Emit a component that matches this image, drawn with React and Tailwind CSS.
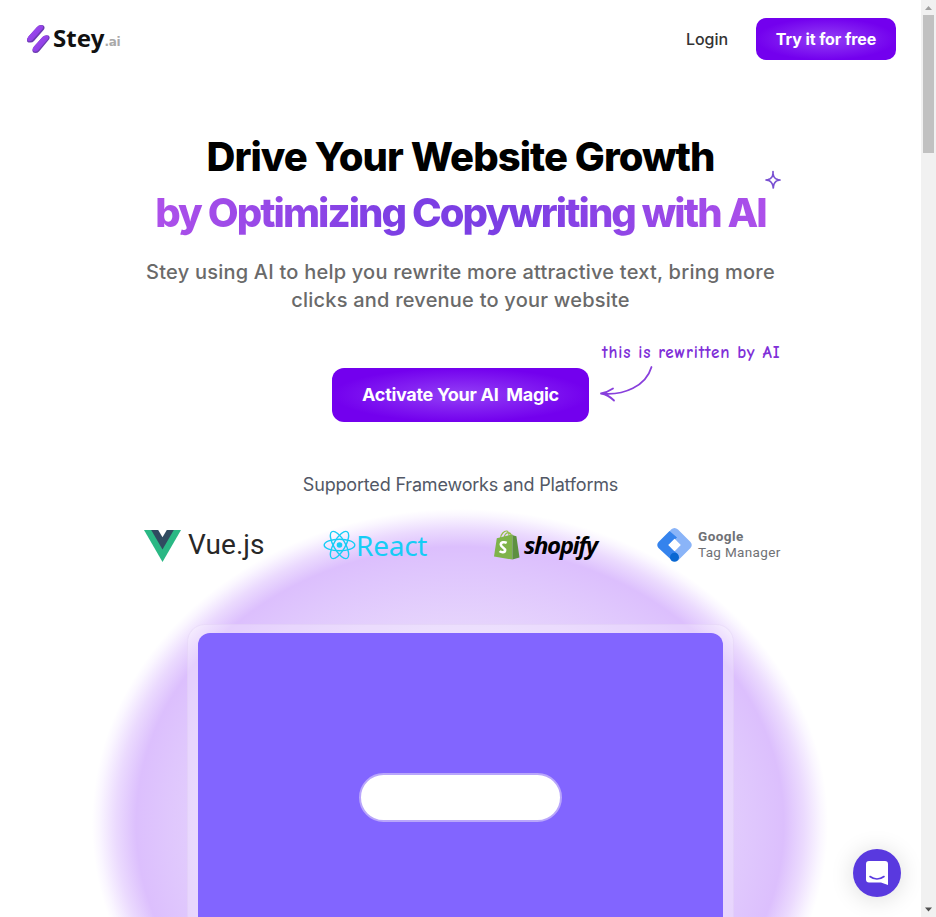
import React from "react";

function SteyMark() {
  return (
    <svg width="24" height="30" viewBox="0 0 24 30" className="shrink-0">
      <defs>
        <linearGradient id="mark" x1="0" y1="0" x2="1" y2="1">
          <stop offset="0" stopColor="#a64ef2" />
          <stop offset="1" stopColor="#8438e0" />
        </linearGradient>
      </defs>
      <path d="M1 17 Q0.500 15 2.500 12.500 L11 3 Q12.500 1 15 1 L17 1.200 Q19.500 2.500 18 5.500 L8 17 Q6.500 18.500 4.500 18.500 L2.500 18.500 Q1.300 18.300 1 17Z" fill="#6b3bb0" />
      <path d="M1.200 15.500 Q1 14.300 2.500 12.500 L11 3 Q13 1 15.500 1.200 Q18.200 2 16.500 5 L6.500 16 Q4 18 2 17 Q1.300 16.500 1.200 15.500Z" fill="url(#mark)" />
      <path d="M6.500 27 Q6 25 8 22.500 L16.500 13 Q18 11.200 20.500 11.200 L22.500 11.500 Q24.500 13 23 15.500 L13 27.500 Q11.500 29 9.500 29 L8 28.800 Q6.800 28.500 6.500 27Z" fill="#6b3bb0" />
      <path d="M6.700 25.500 Q6.500 24.300 8 22.500 L16.500 13 Q18.500 11.200 21 11.400 Q23.500 12.300 22 15 L12 26.500 Q9.500 28.500 7.500 27 Q6.800 26.500 6.700 25.500Z" fill="url(#mark)" />
    </svg>
  );
}

function Header() {
  return (
    <header className="flex h-[78px] items-center justify-between pl-[26px] pr-[25px]">
      <div className="flex items-center">
        <SteyMark />
        <span className="-mt-[2px] ml-[3px] whitespace-nowrap font-['Noto_Sans',sans-serif] text-[24px] font-bold leading-[30px] tracking-[0.1px] text-[#111]">
          Stey
        </span>
        <span className="mt-[6px] font-['DejaVu_Sans',sans-serif] text-[12px] font-bold leading-4 tracking-[-0.4px] text-[#a9a9a9]">.ai</span>
      </div>
      <nav className="flex items-center gap-7">
        <a className="font-['Inter',sans-serif] text-[16px] font-medium leading-6 tracking-[-0.05px] text-[#333]">Login</a>
        <button className="h-[42px] w-[140px] whitespace-nowrap rounded-[10px] bg-[radial-gradient(ellipse_closest-side,#9340f5,#7300ee)] font-['Inter',sans-serif] text-[16px] font-bold tracking-[-0.08px] text-white">
          Try it for free
        </button>
      </nav>
    </header>
  );
}

function Sparkle() {
  return (
    <svg width="18" height="20" viewBox="0 0 18 20" className="absolute -right-[16px] -top-[15px]" fill="none" stroke="#7950d2" strokeWidth="1.7" strokeLinejoin="round" strokeLinecap="round">
      <path d="M9 1.500 V3.500 C9.500 7.500 11 9 14 9.700 L16 10 L14 10.300 C11.500 11.300 10 13 9.500 16 L9.300 18 L9 16 C8.300 13.300 6.500 11 4 10.300 L2 10 L4 9.700 C7 9 8.700 7 9 3.500" />
    </svg>
  );
}

function Hero() {
  return (
    <section className="flex flex-col items-center pt-[51px]">
      <h1 className="flex flex-col items-center whitespace-nowrap font-['Inter',sans-serif] text-[40px] font-extrabold leading-[56px]">
        <span className="tracking-[-0.96px] text-black">Drive Your Website Growth</span>
        <span className="relative">
          <span className="bg-[linear-gradient(90deg,#ad50ea,#7c3fe4_40%,#7c3fe4_60%,#ad50ea)] bg-clip-text tracking-[-1.95px] text-transparent">
            by Optimizing Copywriting with AI
          </span>
          <Sparkle />
        </span>
      </h1>
      <p className="mt-[17px] whitespace-nowrap text-center font-['Inter',sans-serif] text-[20px] font-medium leading-7 tracking-[0.22px] text-[#6a6a6a]">
        Stey using AI to help you rewrite more attractive text, bring more
        <br />
        clicks and revenue to your website
      </p>
      <div className="relative mt-[54px]">
        <button className="block h-[54px] w-[257px] whitespace-pre rounded-[12px] bg-[radial-gradient(ellipse_closest-side,#9340f5,#7300ee)] pb-[2px] font-['Inter',sans-serif] text-[18px] font-bold tracking-[-0.3px] text-white">
          {"Activate Your AI  Magic"}
        </button>
        <div className="absolute left-[267px] top-[-27px] w-[190px]">
          <div className="whitespace-nowrap pl-[3px] font-['Comic_Neue','Lato',cursive] text-[17px] font-semibold leading-6 tracking-[0.85px] text-[#8030d8]">
            this is rewritten by AI
          </div>
          <svg width="56" height="40" viewBox="0 0 56 40" className="-mt-px" fill="none" stroke="#883fdc" strokeWidth="1.8" strokeLinecap="round" strokeLinejoin="round">
            <path d="M52.500 3 C47 22 25 32 2 29.500 M14 24.500 Q8 28.500 2 29.500 Q9 30.500 15 36.500" />
          </svg>
        </div>
      </div>
    </section>
  );
}

function VueLogo() {
  return (
    <div className="flex w-[121px] items-center">
      <svg width="37" height="32" viewBox="0 0 37 32" className="mt-[2px] shrink-0">
        <path d="M0 0h37L18.5 32z" fill="#2ab884" />
        <path d="M7.2 0h22.6L18.5 19.5z" fill="#304b60" />
        <path d="M14.2 0h8.6L18.5 7.2z" fill="#fff" />
      </svg>
      <span className="-mt-px ml-[7px] font-['Roboto',sans-serif] text-[28px] leading-8 tracking-[0.05px] text-[#282828]">Vue.js</span>
    </div>
  );
}

function ReactLogo() {
  return (
    <div className="flex w-[106px] items-center">
      <svg width="33" height="30" viewBox="-16.5 -15 33 30" fill="none" stroke="#16cdf5" strokeWidth="1.4" className="shrink-0">
        <ellipse rx="15.3" ry="5.8" />
        <ellipse rx="15.3" ry="5.8" transform="rotate(60)" />
        <ellipse rx="15.3" ry="5.8" transform="rotate(120)" />
        <circle r="2.8" fill="#16cdf5" stroke="none" />
      </svg>
      <span className="-mt-px font-['Noto_Sans',sans-serif] text-[28px] font-normal leading-8 tracking-[-0.25px] text-[#16cdf5]">React</span>
    </div>
  );
}

function ShopifyLogo() {
  return (
    <div className="flex w-[106px] items-center">
      <svg width="26" height="30" viewBox="0 0 26 30" className="shrink-0">
        <path d="M6.5 8C7 4 10 1 12.5 1S15 4 15.2 7M10 8c.5-3 2-5.2 4.3-5.4 2 0 3 2 3.4 4" fill="none" stroke="#95bf47" strokeWidth="1.2" />
        <path d="M2.8 8.3 L18.4 4.5 L18.4 29.6 L0 26.4Z" fill="#7fb34a" />
        <path d="M18.4 4.5 L19.5 5.5 L22.4 6.2 L25.5 27.5 L18.4 29.6Z" fill="#5e9040" />
        <path d="M12.7 12.8C10.5 11.7 6.7 12 6.8 14.8c.1 2.4 4.5 3 4.3 5.5-.2 2.6-3.8 2.3-5.5.8" fill="none" stroke="#fff" strokeWidth="2.6" />
      </svg>
      <span className="ml-[4px] whitespace-nowrap font-['Open_Sans',sans-serif] text-[24px] font-bold italic leading-8 tracking-[-1.4px] text-black">shopify</span>
    </div>
  );
}

function TagManagerLogo() {
  return (
    <div className="flex w-[125px] items-center">
      <svg width="35" height="34" viewBox="0 0 35 34" className="shrink-0">
        <path d="M14 1.5 Q17.5 -1.5 21 1.5 L33.5 14 Q36 17 33.5 20 L21 32.5 L14.5 26 L23.5 17 L11.5 5Z" fill="#8ab4f8" />
        <path d="M12.5 3 L20 9.5 L11.5 17 L21 26.5 L15 32.5 L1.5 20 Q-1 17 1.5 14Z" fill="#3583ed" />
        <circle cx="17.5" cy="29.2" r="4.5" fill="#0967d2" />
        <path d="M17.5 10.8l6.2 6.2-6.2 6.2-6.2-6.2z" fill="#fff" />
      </svg>
      <div className="-mt-[2px] ml-[6px] flex flex-col whitespace-nowrap font-['Roboto',sans-serif] text-[13.5px] leading-4 text-[#6f7175]">
        <span className="font-bold tracking-[0.45px]">Google</span>
        <span className="tracking-[0.35px]">Tag Manager</span>
      </div>
    </div>
  );
}

function Platforms() {
  return (
    <section className="relative">
      <h2 className="mt-[49px] text-center font-['Inter',sans-serif] text-[18px] leading-7 tracking-[-0.18px] text-[#525866]">
        Supported Frameworks and Platforms
      </h2>
      <div className="mt-[27px] flex h-[38px] items-center pl-[144px]">
        <VueLogo />
        <div className="ml-[58px]"><ReactLogo /></div>
        <div className="ml-[65px]"><ShopifyLogo /></div>
        <div className="ml-[57px]"><TagManagerLogo /></div>
      </div>
    </section>
  );
}

function Demo() {
  return (
    <section className="relative mx-auto mt-[60px] h-[381px] w-[547px] rounded-[18px] border border-[#d8c5ef]/30 bg-white/25 px-[10px] pt-[8px]">
      <div className="flex h-full justify-center rounded-t-[12px] bg-[#8265ff] pt-[140px]">
        <div className="h-[49px] w-[203px] rounded-full border-2 border-[#b9a6fb] bg-white" />
      </div>
    </section>
  );
}

function Scrollbar() {
  return (
    <div className="flex h-full w-[15px] flex-col items-center justify-between bg-[#f1f1f1]">
      <div className="flex flex-col items-center">
        <svg width="15" height="15" viewBox="0 0 15 15">
          <path d="M4 10h7L7.5 6z" fill="#9f9f9f" />
        </svg>
        <div className="h-[138px] w-[11px] bg-[#c1c1c1]" />
      </div>
      <svg width="15" height="15" viewBox="0 0 15 15">
        <path d="M4 5.5h7l-3.500 4z" fill="#505050" />
      </svg>
    </div>
  );
}

export default function App() {
  return (
    <div className="flex h-[917px] w-[936px] overflow-hidden bg-white">
      <main className="relative h-full w-[921px] overflow-hidden">
        <div className="absolute left-[92px] top-[509px] h-[630px] w-[736px] bg-[radial-gradient(closest-side,#ebdffc_0%,#e7d6fc_60%,#dfc6fd_80%,#dcbffd_88%,#ebdafe_93.500%,#faf6ff_98%,#ffffff_100%)]" />
        <div className="relative">
          <Header />
          <Hero />
          <Platforms />
          <Demo />
        </div>
        <button className="absolute left-[853px] top-[849px] flex h-12 w-12 items-center justify-center rounded-full bg-[#5939df] shadow-[0_2px_24px_rgba(0,0,0,0.14)]">
          <svg width="22" height="24" viewBox="0 0 22 24">
            <path d="M3 0h16q3 0 3 3v21l-7-2.500H3q-3 0-3-3V3q0-3 3-3z" fill="#fff" />
            <path d="M4 15.500q7 5 14 0" fill="none" stroke="#5939df" strokeWidth="1.600" strokeLinecap="round" />
          </svg>
        </button>
      </main>
      <Scrollbar />
    </div>
  );
}
